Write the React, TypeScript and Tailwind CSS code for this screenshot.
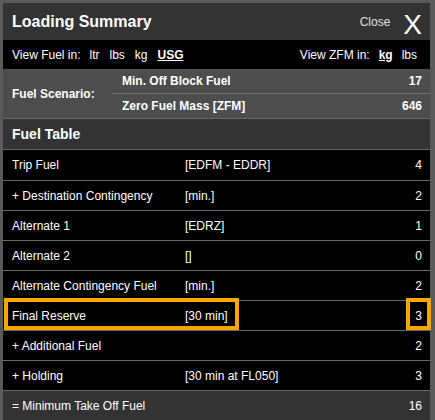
import React from 'react';

type Row = { label: string; detail?: string; value: string; highlight?: boolean; total?: boolean };

const rows: Row[] = [
  { label: 'Trip Fuel', detail: '[EDFM - EDDR]', value: '4' },
  { label: '+ Destination Contingency', detail: '[min.]', value: '2' },
  { label: 'Alternate 1', detail: '[EDRZ]', value: '1' },
  { label: 'Alternate 2', detail: '[]', value: '0' },
  { label: 'Alternate Contingency Fuel', detail: '[min.]', value: '2' },
  { label: 'Final Reserve', detail: '[30 min]', value: '3', highlight: true },
  { label: '+ Additional Fuel', value: '2' },
  { label: '+ Holding', detail: '[30 min at FL050]', value: '3' },
  { label: '= Minimum Take Off Fuel', value: '16', total: true },
];

function FuelRow({ row, first }: { row: Row; first: boolean }) {
  return (
    <div
      className={`relative flex items-center border-t border-[#666] pl-[9px] pr-[8px] ${
        first ? 'h-[31px]' : 'h-[30px]'
      } ${row.total ? 'bg-[#333]' : 'bg-black'}`}
    >
      <span className="w-[173px] shrink-0">{row.label}</span>
      <span className="flex-1">{row.detail}</span>
      <span>{row.value}</span>
      {row.highlight ? (
        <>
          <div className="absolute top-[-3px] left-[1px] h-[32px] w-[235px] border-4 border-[#ffa500]" />
          <div className="absolute top-[-3px] left-[403px] h-[32px] w-[25px] border-4 border-[#ffa500]" />
        </>
      ) : null}
    </div>
  );
}

export default function App() {
  return (
    <div className="w-[435px] h-[420px] overflow-hidden bg-[#5a5a5a] pl-[3px] pr-[5px] pt-[3px] font-['Liberation_Sans',Arial,sans-serif] text-[12px] text-white">
      <div className="flex h-[37px] items-center bg-[#333] pl-[9px] pr-[8px]">
        <span className="text-[16px] font-bold">Loading Summary</span>
        <span className="ml-auto mr-[13px] text-[#e0e0e0]">Close</span>
        <span className="mt-[6px] text-[28px] leading-none">X</span>
      </div>

      <div className="flex h-[29px] items-center bg-black pl-[9px] pr-[13px]">
        <span className="mr-[9px]">View Fuel in:</span>
        <div className="flex gap-[10px]">
          <span>ltr</span>
          <span>lbs</span>
          <span>kg</span>
          <span className="font-bold underline">USG</span>
        </div>
        <div className="ml-auto flex gap-[9px]">
          <span>View ZFM in:</span>
          <span className="font-bold underline">kg</span>
          <span>lbs</span>
        </div>
      </div>

      <div className="flex h-[50px] border-b border-[#666] bg-[#4d4d4d] font-bold">
        <div className="flex w-[109px] shrink-0 items-center pl-[9px]">Fuel Scenario:</div>
        <div className="flex flex-1 flex-col">
          <div className="flex h-[25px] items-center justify-between border-b border-[#707070] pl-[10px] pr-[8px]">
            <span>Min. Off Block Fuel</span>
            <span>17</span>
          </div>
          <div className="flex h-[24px] items-center justify-between pl-[10px] pr-[8px]">
            <span>Zero Fuel Mass [ZFM]</span>
            <span>646</span>
          </div>
        </div>
      </div>

      <div className="flex h-[30px] items-center bg-[#333] pl-[9px] text-[14px] font-bold">Fuel Table</div>

      {rows.map((r, i) => (
        <FuelRow key={r.label} row={r} first={i === 0} />
      ))}
    </div>
  );
}
